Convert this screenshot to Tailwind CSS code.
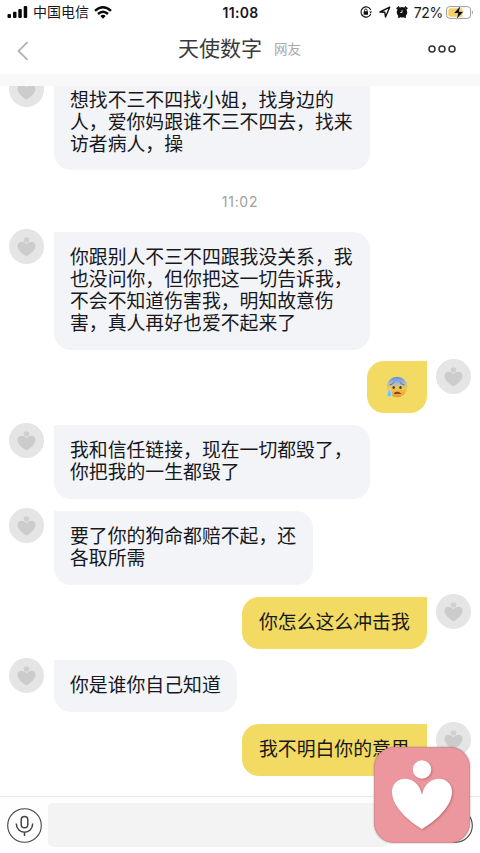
<!DOCTYPE html>
<html lang="zh-CN">
<head>
<meta charset="utf-8">
<meta name="viewport" content="width=device-width, initial-scale=1">
<title>天使数字</title>
<script src="https://cdn.jsdelivr.net/npm/@tailwindcss/browser@4"></script>
</head>
<body class="bg-white">
<svg class="hidden">
  <symbol id="avatar" viewBox="0 0 35 35">
    <circle cx="17.5" cy="17.5" r="17.5" fill="#e5e5e5"/>
    <circle cx="17.5" cy="11" r="2.8" fill="#d0d0d0"/>
    <path d="M17.5 27.5C13 24.500 8.500 21 8.500 16.700C8.500 12.200 14.500 11.200 17.500 15.300C20.500 11.200 26.500 12.200 26.500 16.700C26.500 21 22 24.500 17.500 27.500Z" fill="#cccccc"/>
  </symbol>
</svg>
<div class="relative flex h-[853px] w-[480px] flex-col overflow-hidden bg-white font-['Liberation_Sans','Noto_Sans_CJK_SC',sans-serif] text-[#17181c]">
  <header class="z-10 h-[86px] shrink-0 border-b-[12px] border-[#f8f8f9] bg-white">
    <div class="grid h-6 grid-cols-3 items-center pl-[7px] pr-[6px]">
      <div class="flex items-center">
        <svg class="h-3 w-[21px]" viewBox="0 0 21 12"><g fill="#080808"><rect x="0.500" y="8" width="3.500" height="4" rx="1"/><rect x="6" y="5.800" width="3.500" height="6.200" rx="1"/><rect x="11.300" y="3" width="3.500" height="9" rx="1"/><rect x="16.700" y="0" width="3.500" height="12" rx="1"/></g></svg>
        <span class="ml-[5px] whitespace-nowrap text-[14px] leading-6">中国电信</span>
        <svg class="ml-[5px] h-[13px] w-[18px]" viewBox="0 0 18 13"><g fill="none" stroke="#080808" stroke-width="2.400"><path d="M1 4.900Q9-2.300 17 4.900"/><path d="M4 8Q9 3.500 14 8"/></g><path d="M6.300 10Q9 7.500 11.700 10L9 12.800Z" fill="#080808"/></svg>
      </div>
      <span class="text-center font-[Inter,sans-serif] text-[14px] font-semibold tracking-[0.25px]">11:08</span>
      <div class="flex items-center justify-end">
        <svg class="h-3 w-3" viewBox="0 0 12 12"><path d="M10.800 4A5.100 5.100 0 1 0 10.800 8" fill="none" stroke="#111" stroke-width="1.100"/><path d="M9.300 5.500h2.700l-1.300 2z" fill="#111"/><rect x="3.600" y="5.300" width="4.400" height="3.500" rx=".5" fill="#111"/><path d="M4.500 5.500V4.300a1.300 1.300 0 0 1 2.600 0v1.200" fill="none" stroke="#111" stroke-width=".9"/></svg>
        <svg class="ml-[7px] h-3 w-3" viewBox="0 0 12 12"><path d="M1 6L10.700 1.200L6.500 11L5.800 6.300Z" fill="none" stroke="#111" stroke-width="1.400" stroke-linejoin="round"/></svg>
        <svg class="ml-[5px] h-3 w-3" viewBox="0 0 12 12"><circle cx="6" cy="6.300" r="5.200" fill="#111"/><path d="M.7 3L3.300.8M11.300 3L8.700.8M2.300 11.700l1.500-1.700M9.700 11.700L8.200 10" stroke="#111" stroke-width="1.800"/><path d="M6 4v2.500H4.200" fill="none" stroke="#fff" stroke-width=".8"/></svg>
        <span class="ml-[6px] font-[Inter,sans-serif] text-[14px] tracking-[-0.3px]">72%</span>
        <svg class="ml-[3px] h-[15px] w-7" viewBox="0 0 28 15"><rect x=".6" y="1.600" width="24" height="11.800" rx="3.200" fill="#fff" stroke="#999" stroke-width="1"/><path d="M4.300 3.200H16.500V11.800H4.300a2 2 0 0 1-2-2V5.200a2 2 0 0 1 2-2Z" fill="#f8cf60"/><path d="M26 5.600q2 1.900 0 3.800z" fill="#999"/><path d="M14.800.5L7.500 8.300H12L10.300 14.500L17.700 6.500H13.200Z" fill="#080808" stroke="#fff" stroke-width=".5"/></svg>
      </div>
    </div>
    <div class="flex h-[50px] items-center pl-[17px] pr-6">
      <svg class="mt-1 h-5 w-3" viewBox="0 0 12 20"><path d="M10.500 1.200L1.500 10L10.500 18.800" fill="none" stroke="#b2b2b2" stroke-width="1.800"/></svg>
      <h1 class="ml-[149px] text-[21px] font-normal leading-8 text-[#3a3a3a]">天使数字</h1>
      <span class="ml-3 mt-px text-[13.500px] leading-6 text-[#aaa]">网友</span>
      <svg class="ml-auto h-2 w-7" viewBox="0 0 28 8"><g fill="none" stroke="#333" stroke-width="1.500"><circle cx="4" cy="4" r="3"/><circle cx="14" cy="4" r="3"/><circle cx="24" cy="4" r="3"/></g></svg>
    </div>
  </header>

  <main class="relative h-[710px] shrink-0 overflow-hidden px-[9px] text-[18.850px] leading-[22.050px]">
    <div class="-mt-[12px] flex flex-col gap-[11.700px]">
      <div class="flex items-start gap-[10px]">
        <svg class="-mt-0.5 size-[35px] shrink-0"><use href="#avatar"/></svg>
        <p class="w-[316px] whitespace-nowrap rounded-[17px] rounded-tl-none bg-[#f2f4f8] px-4 pb-[14px] pt-4">想找不三不四找小姐，找身边的<br>人，爱你妈跟谁不三不四去，找来<br>访者病人，操</p>
      </div>
      <time class="mb-[7px] mt-[8px] text-center font-[Inter,sans-serif] text-[14px] leading-[23px] tracking-[0.7px] text-[#a0a0a0]">11:02</time>
      <div class="flex items-start gap-[10px]">
        <svg class="-mt-[2.500px] size-[35px] shrink-0"><use href="#avatar"/></svg>
        <p class="w-[316px] whitespace-nowrap rounded-[17px] rounded-tl-none bg-[#f2f4f8] px-4 py-[15px]">你跟别人不三不四跟我没关系，我<br>也没问你，但你把这一切告诉我，<br>不会不知道伤害我，明知故意伤<br>害，真人再好也爱不起来了</p>
      </div>
      <div class="flex items-start justify-end gap-[9px]">
        <div class="flex h-[52px] w-[60px] items-center justify-center rounded-[17px] rounded-tr-none bg-[#f2da63]">
          <svg class="h-[23px] w-[22px]" viewBox="0 0 22 23" role="img" aria-label="😰">
            <defs><linearGradient id="face" x2="0" y2="1"><stop stop-color="#5f8fe0"/><stop offset=".35" stop-color="#a9bdd2"/><stop offset=".55" stop-color="#f3c94c"/><stop offset="1" stop-color="#e59a35"/></linearGradient></defs>
            <circle cx="11" cy="11" r="10.300" fill="url(#face)"/>
            <path d="M3.500 9Q6.500 8.500 8.300 6M18.500 9Q15.500 8.500 13.700 6" fill="none" stroke="#6d6250" stroke-width=".9"/>
            <ellipse cx="7.700" cy="11.500" rx="1.200" ry="1.500" fill="#533712"/><ellipse cx="14.500" cy="11.500" rx="1.200" ry="1.500" fill="#533712"/>
            <path d="M8 17.500Q11.200 14.500 14.500 17.500Q11.200 17 8 17.500Z" fill="#813d1c" stroke="#813d1c"/>
            <path d="M3.300 12.500Q.8 16.500.8 18.500a2.500 2.500 0 0 0 5 0Q5.800 16.500 3.300 12.500Z" fill="#79c6ec" stroke="#d5f0f5" stroke-width=".6"/>
          </svg>
        </div>
        <svg class="-mt-[2.500px] size-[35px] shrink-0"><use href="#avatar"/></svg>
      </div>
      <div class="flex items-start gap-[10px]">
        <svg class="-mt-[2.500px] size-[35px] shrink-0"><use href="#avatar"/></svg>
        <p class="w-[316px] whitespace-nowrap rounded-[17px] rounded-tl-none bg-[#f2f4f8] px-4 py-[15px]">我和信任链接，现在一切都毁了，<br>你把我的一生都毁了</p>
      </div>
      <div class="flex items-start gap-[10px]">
        <svg class="-mt-[2.500px] size-[35px] shrink-0"><use href="#avatar"/></svg>
        <p class="w-[259px] whitespace-nowrap rounded-[17px] rounded-tl-none bg-[#f2f4f8] px-4 py-[15px]">要了你的狗命都赔不起，还<br>各取所需</p>
      </div>
      <div class="flex items-start justify-end gap-[9px]">
        <p class="w-[185px] whitespace-nowrap rounded-[17px] rounded-tr-none bg-[#f2da63] px-[17px] py-[15px]">你怎么这么冲击我</p>
        <svg class="-mt-[2.500px] size-[35px] shrink-0"><use href="#avatar"/></svg>
      </div>
      <div class="flex items-start gap-[10px]">
        <svg class="-mt-[2.500px] size-[35px] shrink-0"><use href="#avatar"/></svg>
        <p class="w-[183px] whitespace-nowrap rounded-[17px] rounded-tl-none bg-[#f2f4f8] px-4 py-[15px]">你是谁你自己知道</p>
      </div>
      <div class="flex items-start justify-end gap-[9px]">
        <p class="w-[185px] whitespace-nowrap rounded-[17px] rounded-tr-none bg-[#f2da63] px-[17px] py-[15px]">我不明白你的意思</p>
        <svg class="-mt-[2.500px] size-[35px] shrink-0"><use href="#avatar"/></svg>
      </div>
    </div>
  </main>

  <footer class="flex h-[57px] shrink-0 items-center gap-[6px] border-t border-[#e7e7e7] bg-[#fefefe] pl-[7px] pr-[7px]">
    <svg class="size-[35px] shrink-0" viewBox="0 0 35 35"><g fill="none" stroke="#444"><circle cx="17.500" cy="17.500" r="16.800" stroke-width="1.100"/><rect x="14.200" y="8.500" width="6.600" height="11.200" rx="3.300" stroke-width="1.500"/><path d="M9.300 15.500C9.300 27 25.700 27 25.700 15.500M17.500 24.300V28" stroke-width="1.500"/></g></svg>
    <div class="h-11 w-[340px] rounded-[5px] bg-[#f3f3f3]"></div>
    <svg class="ml-auto size-[35px] shrink-0" viewBox="0 0 35 35"><circle cx="17.500" cy="17.500" r="16.800" fill="none" stroke="#444" stroke-width="1.100"/></svg>
  </footer>

  <div class="absolute left-[374px] top-[747px] z-20 size-24 rounded-[20px] border border-[#d88b92] bg-[#ec979e] shadow-[0_0_2px_rgba(0,0,0,0.35)]">
    <svg class="size-full" viewBox="1 1 94 94"><g fill="#fff" class="drop-shadow-[1px_1px_1px_rgba(120,50,60,0.4)]"><circle cx="48" cy="22.500" r="9.300"/><path d="M48 82C36 75 18 60 18 45C18 28 44 26 48 48C52 26 78 28 78 45C78 60 60 75 48 82Z"/></g></svg>
  </div>
</div>
</body>
</html>
